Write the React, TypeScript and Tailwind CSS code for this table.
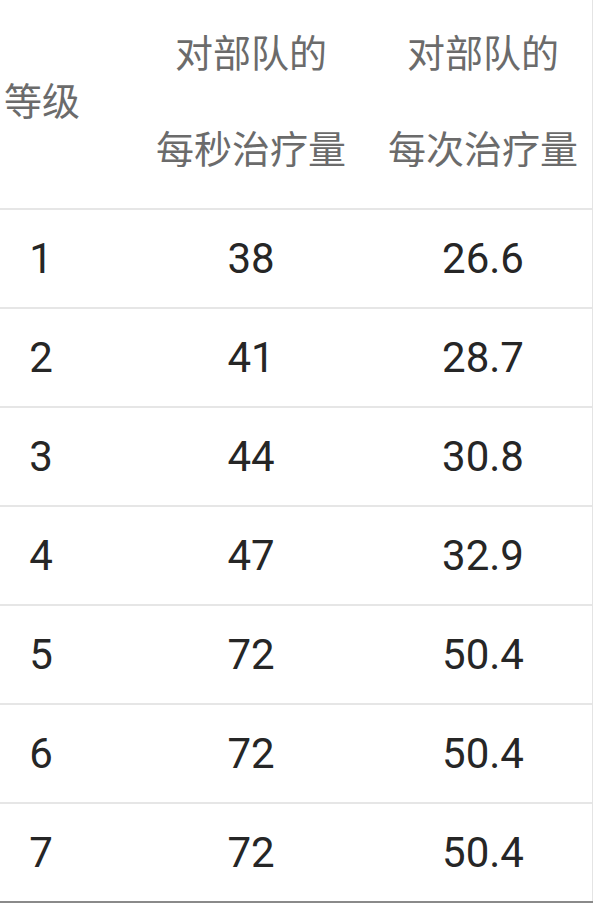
const rows = [
  ["1", "38", "26.6"],
  ["2", "41", "28.7"],
  ["3", "44", "30.8"],
  ["4", "47", "32.9"],
  ["5", "72", "50.4"],
  ["6", "72", "50.4"],
  ["7", "72", "50.4"],
];

export default function App() {
  return (
    <div className="w-[593px] h-[903px] overflow-hidden bg-white font-['Roboto','Noto_Sans_CJK_SC',sans-serif]">
      <div className="h-[901px] overflow-hidden border-r border-[#e4e4e4]">
        {/* 表头 */}
        <div className="grid grid-cols-[84px_290px_1fr] h-[210px] border-b-2 border-[#e6e6e6] text-[38px] text-[#6b6b6b] leading-[96px] text-center">
          <div className="flex items-center justify-center pb-[4px]">等级</div>
          <div className="flex flex-col justify-center pl-[44px] pb-[4px]">
            <span>对部队的</span>
            <span>每秒治疗量</span>
          </div>
          <div className="flex flex-col justify-center pb-[4px]">
            <span>对部队的</span>
            <span>每次治疗量</span>
          </div>
        </div>

        {rows.map((r) => (
          <div
            key={r[0]}
            className="grid grid-cols-[82px_292px_1fr] h-[99px] border-b-2 border-[#e6e6e6] text-[42px] text-[#262626] text-center items-center"
          >
            <div>{r[0]}</div>
            <div className="pl-[46px]">{r[1]}</div>
            <div>{r[2]}</div>
          </div>
        ))}
      </div>
      <div className="h-[2px] bg-[#8a8a8a]"></div>
    </div>
  );
}
